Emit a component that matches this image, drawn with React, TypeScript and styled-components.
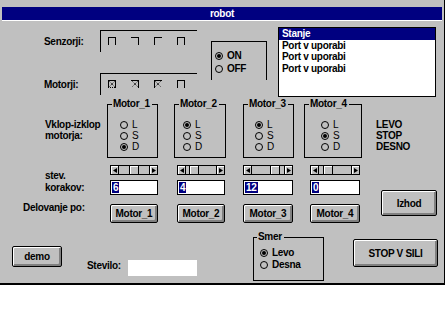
import React from "react";
import styled, { createGlobalStyle } from "styled-components";

const FONT = `"Liberation Sans", Arial, sans-serif`;

const GlobalStyle = createGlobalStyle`
  html, body { margin: 0; padding: 0; background: #ffffff; }
  body { font-family: ${FONT}; font-size: 10px; font-weight: bold; letter-spacing: -0.3px; color: #000; }
  * { box-sizing: border-box; }
`;

const Window = styled.div`
  width: 445px;
  height: 285px;
  background: #c0c0c0;
  border-right: 1px solid #000;
  border-bottom: 2px solid #000;
  display: flex;
  flex-direction: column;
  overflow: hidden;
`;

const TitleBar = styled.div`
  margin: 7px 2px 0 2px;
  height: 14px;
  background: #000080;
  border-bottom: 1px solid #fff;
  color: #fff;
  text-align: center;
  line-height: 13px;
`;

/* ---------- top section ---------- */
const TopSection = styled.div`
  height: 77px;
  padding: 6px 0 0 44px;
  display: flex;
  align-items: flex-start;
`;

const PanelStack = styled.div`
  margin-top: 3px;
  display: flex;
  flex-direction: column;
  gap: 21px;
`;

const PanelRow = styled.div`
  display: flex;
  align-items: flex-start;
`;

const PanelLabel = styled.div`
  width: 56px;
  padding-top: 6px;
  line-height: 12px;
`;

const Bracket = styled.div`
  width: 97px;
  height: 22px;
  border-top: 1px solid #000;
  border-left: 1px solid #000;
  display: flex;
  align-items: flex-start;
  gap: 15px;
  padding: 6px 0 0 7px;
`;

const OnOffBox = styled.div`
  margin: 14px 0 0 14px;
  width: 56px;
  height: 39px;
  border: 1px solid #000;
  border-bottom: none;
  padding: 7px 0 0 3px;
`;

const RadioRow = styled.div<{ $h: number; $light?: boolean }>`
  display: flex;
  align-items: center;
  gap: 4px;
  height: ${(p) => p.$h}px;
  line-height: ${(p) => p.$h}px;
  font-weight: ${(p) => (p.$light ? "normal" : "bold")};
  svg { flex: none; }
`;

const ListBox = styled.div`
  margin-left: 11px;
  width: 158px;
  height: 70px;
  border: 1px solid #000;
  background: #fff;
  display: flex;
  flex-direction: column;
`;

const ListItem = styled.div<{ $selected?: boolean }>`
  height: 11.7px;
  line-height: 11.7px;
  padding-left: 3px;
  white-space: nowrap;
  background: ${(p) => (p.$selected ? "#000080" : "transparent")};
  color: ${(p) => (p.$selected ? "#fff" : "#000")};
`;

/* ---------- motor section ---------- */
const MotorSection = styled.div`
  height: 126px;
  display: flex;
  align-items: flex-start;
`;

const LabelColumn = styled.div`
  width: 107px;
  padding-left: 23px;
  display: flex;
  flex-direction: column;
`;

const SideLabel = styled.div<{ $mt: number; $indent?: number; $lh: number }>`
  margin-top: ${(p) => p.$mt}px;
  margin-left: ${(p) => p.$indent ?? 0}px;
  line-height: ${(p) => p.$lh}px;
  white-space: nowrap;
`;

const MotorColumn = styled.div<{ $w: number }>`
  width: ${(p) => p.$w}px;
  display: flex;
  flex-direction: column;
  align-items: flex-start;
`;

const GroupBox = styled.fieldset<{ $w: number; $h: number; $ml: number; $mt?: number }>`
  margin: ${(p) => p.$mt ?? 0}px 0 0 ${(p) => p.$ml}px;
  width: ${(p) => p.$w}px;
  height: ${(p) => p.$h}px;
  padding: 0;
  border: 1px solid #000;
  min-width: 0;
  flex: none;
`;

const Legend = styled.legend<{ $ml: number }>`
  padding: 0 2px 0 1px;
  margin-left: ${(p) => p.$ml}px;
  line-height: 12px;
  font-size: 10px;
`;

const GroupBody = styled.div<{ $pl: number; $pt: number }>`
  padding: ${(p) => p.$pt}px 0 0 ${(p) => p.$pl}px;
`;

const ScrollBar = styled.div<{ $ml: number; $w: number }>`
  margin: 7px 0 0 ${(p) => p.$ml}px;
  width: ${(p) => p.$w}px;
  height: 10px;
  border: 1px solid #000;
  display: flex;
  background: #c0c0c0;
`;

const ScrollArrow = styled.div<{ $side: "left" | "right" }>`
  width: 8px;
  height: 100%;
  flex: none;
  background: #c0c0c0;
  border-left: ${(p) => (p.$side === "right" ? "1px solid #000" : "none")};
  border-right: ${(p) => (p.$side === "left" ? "1px solid #000" : "none")};
  box-shadow: inset 1px 1px 0 #fff;
  display: flex;
  align-items: center;
  justify-content: center;
`;

const ScrollTrack = styled.div`
  flex: 1;
  display: flex;
  background: #c0c0c0;
`;

const ScrollThumb = styled.div`
  width: 10px;
  height: 100%;
  flex: none;
  border-left: 1px solid #000;
  border-right: 1px solid #000;
  background: #c0c0c0;
  box-shadow: inset 1px 1px 0 #fff;
`;

const ValueField = styled.div<{ $ml: number; $w: number }>`
  margin: 5px 0 0 ${(p) => p.$ml}px;
  width: ${(p) => p.$w}px;
  height: 15px;
  background: #fff;
  border: 1px solid #000;
  padding: 0 0 0 1px;
  display: flex;
  align-items: center;
`;

const SelectedText = styled.span`
  background: #000080;
  color: #fff;
  line-height: 11px;
  padding: 0 1px;
`;

const WinButton = styled.button<{ $w: number; $h: number; $ml?: number; $mt?: number }>`
  margin: ${(p) => p.$mt ?? 0}px 0 0 ${(p) => p.$ml ?? 0}px;
  width: ${(p) => p.$w}px;
  height: ${(p) => p.$h}px;
  flex: none;
  padding: 0;
  background: #c0c0c0;
  border: 1px solid #000;
  border-radius: 2px;
  box-shadow: inset 1px 1px 0 #fff, inset -1px -1px 0 #808080, inset -2px -2px 0 #808080;
  font-family: ${FONT};
  font-size: 10px;
  font-weight: bold;
  letter-spacing: -0.3px;
  color: #000;
`;

const RightColumn = styled.div`
  display: flex;
  flex-direction: column;
  align-items: flex-start;
`;

/* ---------- bottom section ---------- */
const BottomSection = styled.div`
  flex: 1;
  padding-left: 12px;
  display: flex;
  align-items: flex-start;
`;

const InlineLabel = styled.div<{ $ml: number; $mt: number; $w: number }>`
  margin: ${(p) => p.$mt}px 0 0 ${(p) => p.$ml}px;
  width: ${(p) => p.$w}px;
  line-height: 12px;
`;

const PlainField = styled.div<{ $mt: number; $w: number; $h: number }>`
  margin-top: ${(p) => p.$mt}px;
  width: ${(p) => p.$w}px;
  height: ${(p) => p.$h}px;
  background: #fff;
`;

/* ---------- drawings ---------- */
const RadioMark = ({ checked }: { checked?: boolean }) => (
  <svg width="8" height="8" viewBox="0 0 8 8">
    <circle cx="4" cy="4" r="3.5" fill="none" stroke="#000" strokeWidth="1" />
    {checked && <circle cx="4" cy="4" r="2" fill="#000" />}
  </svg>
);

type GlyphKind = "u" | "tr" | "tl";
const Glyph = ({ kind, cross, boxed }: { kind: GlyphKind; cross?: boolean; boxed?: boolean }) => (
  <svg width="8" height="8" viewBox="0 0 8 8" shapeRendering="crispEdges">
    <line x1="0" y1="0.5" x2="8" y2="0.5" stroke="#000" />
    {(kind === "u" || kind === "tl") && <line x1="0.5" y1="0" x2="0.5" y2="8" stroke="#000" />}
    {(kind === "u" || kind === "tr") && <line x1="7.5" y1="0" x2="7.5" y2="8" stroke="#000" />}
    {boxed && <line x1="0" y1="7.5" x2="8" y2="7.5" stroke="#000" strokeDasharray="1 1" />}
    {cross && (
      <>
        <line x1="1.5" y1="1.5" x2="6.5" y2="6.5" stroke="#000" strokeDasharray="1 1" shapeRendering="auto" />
        <line x1="6.5" y1="1.5" x2="1.5" y2="6.5" stroke="#000" strokeDasharray="1 1" shapeRendering="auto" />
      </>
    )}
  </svg>
);

const Arrow = ({ dir }: { dir: "left" | "right" }) => (
  <svg width="4" height="5" viewBox="0 0 4 5">
    {dir === "left" ? <polygon points="4,0 4,5 0,2.5" fill="#000" /> : <polygon points="0,0 0,5 4,2.5" fill="#000" />}
  </svg>
);

/* ---------- data ---------- */
type Motor = {
  name: string;
  sel: "L" | "S" | "D";
  value: string;
  colW: number;
  boxMl: number;
  boxW: number;
  radioPad: number;
  ctlMl: number;
  ctlW: number;
  thumb: number;
};

const motors: Motor[] = [
  { name: "Motor_1", sel: "D", value: "6", colW: 67, boxMl: 0, boxW: 51, radioPad: 12, ctlMl: 3, ctlW: 48, thumb: 10 },
  { name: "Motor_2", sel: "L", value: "4", colW: 67, boxMl: 0, boxW: 52, radioPad: 8, ctlMl: 3, ctlW: 48, thumb: 3 },
  { name: "Motor_3", sel: "L", value: "12", colW: 63, boxMl: 2, boxW: 51, radioPad: 11, ctlMl: 2, ctlW: 50, thumb: 18 },
  { name: "Motor_4", sel: "S", value: "0", colW: 72, boxMl: 0, boxW: 58, radioPad: 16, ctlMl: 6, ctlW: 50, thumb: 4 },
];

const sensors: GlyphKind[] = ["u", "tr", "tl", "u"];

export default function App() {
  return (
    <>
      <GlobalStyle />
      <Window>
        <TitleBar>robot</TitleBar>

        <TopSection>
          <PanelStack>
            <PanelRow>
              <PanelLabel>Senzorji:</PanelLabel>
              <Bracket>
                {sensors.map((k, i) => (
                  <Glyph key={i} kind={k} />
                ))}
              </Bracket>
            </PanelRow>
            <PanelRow>
              <PanelLabel>Motorji:</PanelLabel>
              <Bracket>
                <Glyph kind="u" cross boxed />
                <Glyph kind="tr" cross />
                <Glyph kind="tl" cross />
                <Glyph kind="u" />
              </Bracket>
            </PanelRow>
          </PanelStack>

          <OnOffBox>
            <RadioRow $h={13}>
              <RadioMark checked />
              ON
            </RadioRow>
            <RadioRow $h={13}>
              <RadioMark />
              OFF
            </RadioRow>
          </OnOffBox>

          <ListBox>
            <ListItem $selected>Stanje</ListItem>
            <ListItem>Port v uporabi</ListItem>
            <ListItem>Port v uporabi</ListItem>
            <ListItem>Port v uporabi</ListItem>
          </ListBox>
        </TopSection>

        <MotorSection>
          <LabelColumn>
            <SideLabel $mt={21} $indent={22} $lh={11}>
              Vklop-izklop
              <br />
              motorja:
            </SideLabel>
            <SideLabel $mt={29} $indent={22} $lh={12}>
              stev.
              <br />
              korakov:
            </SideLabel>
            <SideLabel $mt={8} $lh={12}>
              Delovanje po:
            </SideLabel>
          </LabelColumn>

          {motors.map((m) => (
            <MotorColumn key={m.name} $w={m.colW}>
              <GroupBox $w={m.boxW} $h={60} $ml={m.boxMl}>
                <Legend $ml={4}>{m.name}</Legend>
                <GroupBody $pl={m.radioPad} $pt={9}>
                  {(["L", "S", "D"] as const).map((o) => (
                    <RadioRow key={o} $h={11} $light>
                      <RadioMark checked={m.sel === o} />
                      {o}
                    </RadioRow>
                  ))}
                </GroupBody>
              </GroupBox>
              <ScrollBar $ml={m.ctlMl} $w={m.ctlW}>
                <ScrollArrow $side="left">
                  <Arrow dir="left" />
                </ScrollArrow>
                <ScrollTrack>
                  <ScrollThumb style={{ marginLeft: m.thumb }} />
                </ScrollTrack>
                <ScrollArrow $side="right">
                  <Arrow dir="right" />
                </ScrollArrow>
              </ScrollBar>
              <ValueField $ml={m.ctlMl} $w={m.ctlW}>
                <SelectedText>{m.value}</SelectedText>
              </ValueField>
              <WinButton $ml={m.ctlMl} $mt={9} $w={m.ctlW} $h={19}>
                {m.name}
              </WinButton>
            </MotorColumn>
          ))}

          <RightColumn>
            <SideLabel $mt={21} $lh={11}>
              LEVO
              <br />
              STOP
              <br />
              DESNO
            </SideLabel>
            <WinButton $ml={5} $mt={38} $w={56} $h={26}>
              Izhod
            </WinButton>
          </RightColumn>
        </MotorSection>

        <BottomSection>
          <WinButton $mt={22} $w={50} $h={21}>
            demo
          </WinButton>
          <InlineLabel $ml={25} $mt={36} $w={41}>
            Stevilo:
          </InlineLabel>
          <PlainField $mt={36} $w={69} $h={16} />
          <GroupBox $w={71} $h={50} $ml={56} $mt={7}>
            <Legend $ml={3}>Smer</Legend>
            <GroupBody $pl={6} $pt={4}>
              <RadioRow $h={12}>
                <RadioMark checked />
                Levo
              </RadioRow>
              <RadioRow $h={12}>
                <RadioMark />
                Desna
              </RadioRow>
            </GroupBody>
          </GroupBox>
          <WinButton $ml={29} $mt={15} $w={85} $h={28}>
            STOP V SILI
          </WinButton>
        </BottomSection>
      </Window>
    </>
  );
}
